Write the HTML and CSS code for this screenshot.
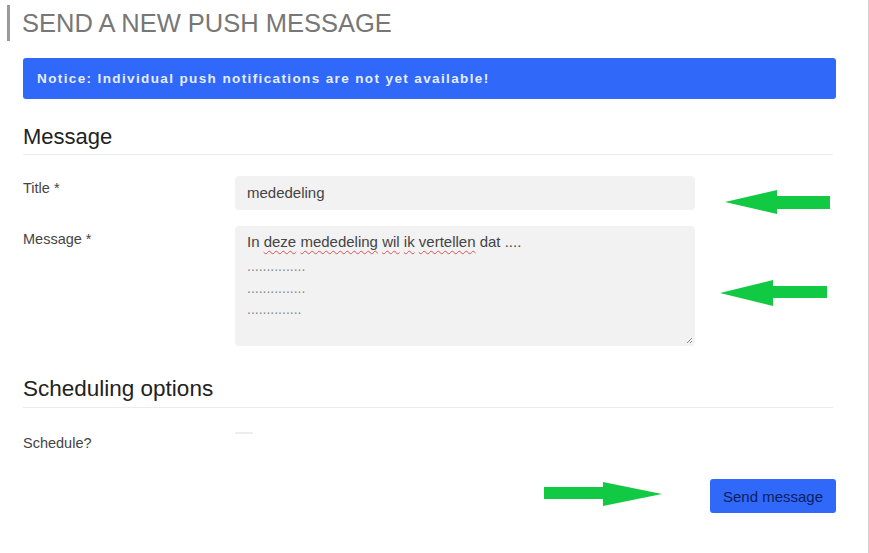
FILE: index.html
```html
<!DOCTYPE html>
<html lang="en">
<head>
<meta charset="utf-8">
<title>Send a new push message</title>
<link rel="stylesheet" href="styles.css">
</head>
<body>
<div class="page">
  <h1 class="page-title">SEND A NEW PUSH MESSAGE</h1>
  <div class="content">
    <div class="notice">Notice: Individual push notifications are not yet available!</div>

    <h2 class="section-title">Message</h2>
    <div class="form-row">
      <label class="form-label">Title *</label>
      <div class="input">mededeling</div>
    </div>
    <div class="form-row row-gap">
      <label class="form-label label-ta">Message *</label>
      <div class="textarea">
        <div class="ta-line first">In <span class="spell">deze</span> <span class="spell">mededeling</span> <span class="spell">wil</span> <span class="spell">ik</span> <span class="spell">vertellen</span> dat ....</div>
        <div class="ta-line dots">...............</div>
        <div class="ta-line dots">...............</div>
        <div class="ta-line dots">..............</div>
        <svg class="grip" width="8" height="8" viewBox="0 0 8 8"><path d="M7 2 L2 7 M7 5 L5 7" stroke="#888" stroke-width="1" fill="none"/></svg>
      </div>
    </div>

    <h2 class="section-title sched-title">Scheduling options</h2>
    <div class="form-row sched-row">
      <label class="form-label">Schedule?</label>
      <div class="toggle-hint"></div>
    </div>

    <div class="actions">
      <button class="btn">Send message</button>
    </div>
  </div>

  <svg class="annotations" width="869" height="553" viewBox="0 0 869 553">
    <polygon points="725,202 777,190 777,196 830,196 830,209 777,209 777,214" fill="#12c944"/>
    <polygon points="720,293 773,280 773,286 827,286 827,298 773,298 773,306" fill="#12c944"/>
    <polygon points="544,487 603,487 603,482 662,494 603,506 603,499 544,499" fill="#12c944"/>
  </svg>
</div>
</body>
</html>
```
FILE: styles.css
```css
html, body {
  margin: 0;
  padding: 0;
  background: #fff;
}

body {
  font-family: "Liberation Sans", Arial, sans-serif;
  color: #444;
}

.page {
  position: relative;
  width: 868px;
  height: 553px;
  border-right: 1px solid #cfcfcf;
  overflow: hidden;
}

.page-title {
  margin: 5px 0 0 7px;
  padding-left: 12px;
  border-left: 3px solid #9a9a9a;
  height: 36px;
  line-height: 36px;
  font-size: 25.5px;
  font-weight: normal;
  color: #777;
}

.content {
  margin-left: 23px;
  width: 813px;
}

.notice {
  margin-top: 17px;
  height: 41px;
  line-height: 41px;
  padding: 0 14px;
  background: #3068fa;
  border-radius: 3px;
  color: #e6edff;
  font-size: 13.5px;
  font-weight: bold;
  letter-spacing: 1.38px;
}

.section-title {
  margin: 25px 3px 0 0;
  padding-bottom: 4px;
  border-bottom: 1px solid #ececec;
  font-size: 22px;
  line-height: 26px;
  font-weight: normal;
  color: #222;
}

.sched-title {
  margin-top: 30px;
  padding-bottom: 5px;
  font-size: 22.5px;
}

.form-row {
  display: flex;
  margin-top: 21px;
}

.row-gap {
  margin-top: 16px;
}

.form-label {
  width: 212px;
  padding-top: 2px;
  font-size: 14.5px;
  line-height: 20px;
  color: #444;
}

.label-ta {
  padding-top: 3px;
}

.input {
  width: 448px;
  height: 34px;
  line-height: 34px;
  padding-left: 12px;
  background: #f2f2f2;
  border-radius: 4px;
  font-size: 15px;
  color: #444;
}

.textarea {
  position: relative;
  width: 448px;
  height: 115px;
  padding: 5px 0 0 12px;
  background: #f2f2f2;
  border-radius: 4px;
  font-size: 15px;
  line-height: 22px;
  color: #444;
}

.ta-line.first {
  margin-bottom: 3px;
}

.ta-line.dots {
  font-size: 14px;
  line-height: 21.5px;
  color: #888;
}

.spell {
  text-decoration: underline wavy #d9534f;
  text-decoration-thickness: 1px;
  text-underline-offset: 3px;
}

.grip {
  position: absolute;
  right: 2px;
  bottom: 2px;
}

.sched-row {
  margin-top: 23px;
}

.toggle-hint {
  width: 18px;
  height: 2px;
  margin-top: 1px;
  background: #ececec;
  border-radius: 1px;
}

.actions {
  display: flex;
  justify-content: flex-end;
  margin-top: 26px;
}

.btn {
  height: 34px;
  width: 126px;
  padding: 0;
  border: none;
  border-radius: 3px;
  background: #3068fa;
  color: #0c1d5e;
  font-family: "Liberation Sans", Arial, sans-serif;
  font-size: 15px;
}

.annotations {
  position: absolute;
  left: 0;
  top: 0;
  pointer-events: none;
}
```
